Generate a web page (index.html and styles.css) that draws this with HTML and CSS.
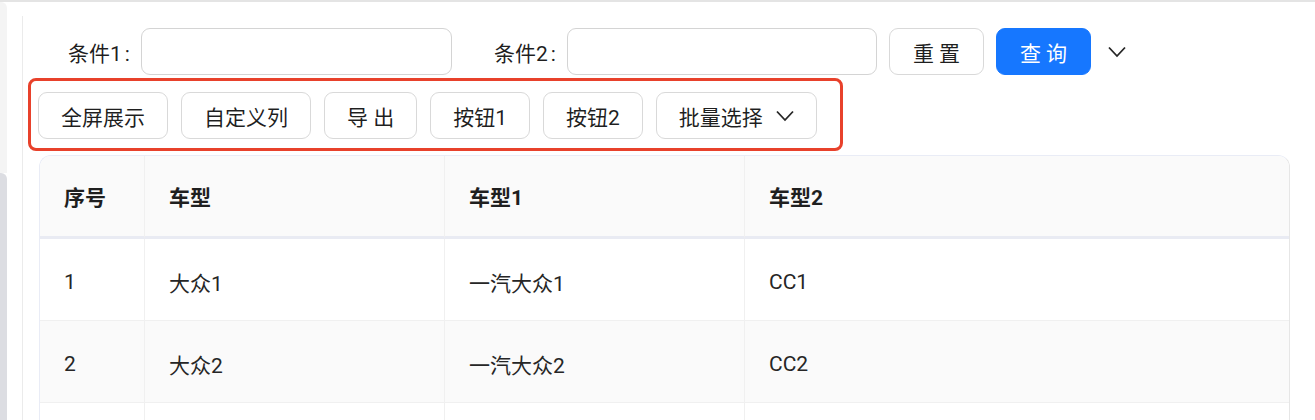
FILE: index.html
```html
<!DOCTYPE html>
<html lang="zh-CN">
<head>
<meta charset="utf-8">
<title>查询列表</title>
<link rel="stylesheet" href="styles.css">
</head>
<body>
<div class="page">
  <div class="side">
    <div class="side-top"></div>
    <div class="side-thumb"></div>
  </div>
  <div class="main">
    <div class="search">
      <div class="field"><label class="label">条件1</label><div class="input"></div></div>
      <div class="field"><label class="label">条件2</label><div class="input input2"></div></div>
      <button class="btn sbtn">重 置</button>
      <button class="btn sbtn primary">查 询</button>
      <span class="expand"><svg width="18" height="12" viewBox="0 0 18 12"><path d="M1 1.5 L9 10 L17 1.5" fill="none" stroke="#262626" stroke-width="1.8"/></svg></span>
    </div>
    <div class="toolbar">
      <button class="btn">全屏展示</button>
      <button class="btn">自定义列</button>
      <button class="btn">导 出</button>
      <button class="btn">按钮1</button>
      <button class="btn">按钮2</button>
      <button class="btn dd">批量选择<svg width="18" height="12" viewBox="0 0 18 12"><path d="M1 1.5 L9 10 L17 1.5" fill="none" stroke="#262626" stroke-width="1.8"/></svg></button>
    </div>
    <div class="table-wrap">
      <table>
        <colgroup><col class="c1"><col class="c2"><col class="c3"><col></colgroup>
        <thead>
          <tr><th>序号</th><th>车型</th><th>车型1</th><th>车型2</th></tr>
        </thead>
        <tbody>
          <tr><td>1</td><td>大众1</td><td>一汽大众1</td><td>CC1</td></tr>
          <tr class="alt"><td>2</td><td>大众2</td><td>一汽大众2</td><td>CC2</td></tr>
          <tr><td></td><td></td><td></td><td></td></tr>
        </tbody>
      </table>
    </div>
  </div>
</div>
</body>
</html>
```

FILE: styles.css
```css
* { box-sizing: border-box; }
html, body { margin: 0; background: #fff; }
body {
  font-family: Roboto, "Noto Sans CJK SC", sans-serif;
  font-size: 21px;
  color: rgba(0, 0, 0, 0.88);
}
.page {
  display: flex;
  height: 420px;
  border-top: 2px solid #e4e4e4;
  overflow: hidden;
}
.side {
  width: 7px;
  display: flex;
  flex-direction: column;
  margin-right: 15px;
  flex-shrink: 0;
}
.side-top {
  height: 171px;
  background: #f4f4f4;
  border-top-right-radius: 6px;
}
.side-thumb {
  flex: 1;
  background: #dcdde2;
  border-top-right-radius: 6px;
}
.main {
  flex: 1;
  margin-top: 14px;
  border-left: 1px solid #ebebeb;
  min-width: 0;
}
.search {
  display: flex;
  align-items: center;
  height: 47px;
  margin-top: 12px;
  padding-left: 45px;
}
.field {
  display: flex;
  align-items: center;
}
.field + .field { margin-left: 42px; }
.label {
  width: 73px;
  padding-right: 12px;
  text-align: right;
  white-space: nowrap;
}
.label::after {
  content: ":";
  margin-left: 3px;
}
.input {
  width: 311px;
  height: 47px;
  border: 1px solid #d4d4d4;
  border-radius: 9px;
  background: #fff;
}
.input2 { width: 310px; }
.btn {
  height: 47px;
  padding: 0 22px;
  border: 1px solid #d9d9d9;
  border-radius: 9px;
  background: #fff;
  font: inherit;
  color: rgba(0, 0, 0, 0.88);
  white-space: nowrap;
  display: inline-flex;
  align-items: center;
  justify-content: center;
}
.sbtn {
  width: 95px;
  padding: 0;
  margin-left: 12px;
}
.primary {
  background: #1677ff;
  border-color: #1677ff;
  color: #fff;
}
.expand {
  display: inline-flex;
  margin-left: 17px;
}
.toolbar {
  display: flex;
  gap: 13px;
  width: 815px;
  margin: 3px 0 0 5px;
  padding: 11px 20px 9px 7px;
  border: 3px solid #e8412b;
  border-radius: 8px;
}
.dd { gap: 13px; }
.table-wrap {
  margin: 4px 25px 0 16px;
  border: 1px solid #e9ecf6;
  border-right-color: #e6e6e6;
  border-bottom: none;
  border-radius: 12px 12px 0 0;
  overflow: hidden;
}
table {
  width: 100%;
  border-collapse: separate;
  border-spacing: 0;
  table-layout: fixed;
}
.c1 { width: 105px; }
.c2 { width: 300px; }
.c3 { width: 300px; }
th, td {
  text-align: left;
  padding: 0 24px;
  border-right: 1px solid #f0f0f0;
  white-space: nowrap;
}
th:last-child, td:last-child { border-right: none; }
th {
  height: 83px;
  background: #fafafa;
  font-weight: 700;
  color: #1f1f1f;
  border-bottom: 3px solid #e9ebf3;
}
td {
  height: 82px;
  padding-top: 4px;
  border-bottom: 1px solid #f0f0f0;
  color: #262626;
}
.alt td { background: #fafafa; }
```
